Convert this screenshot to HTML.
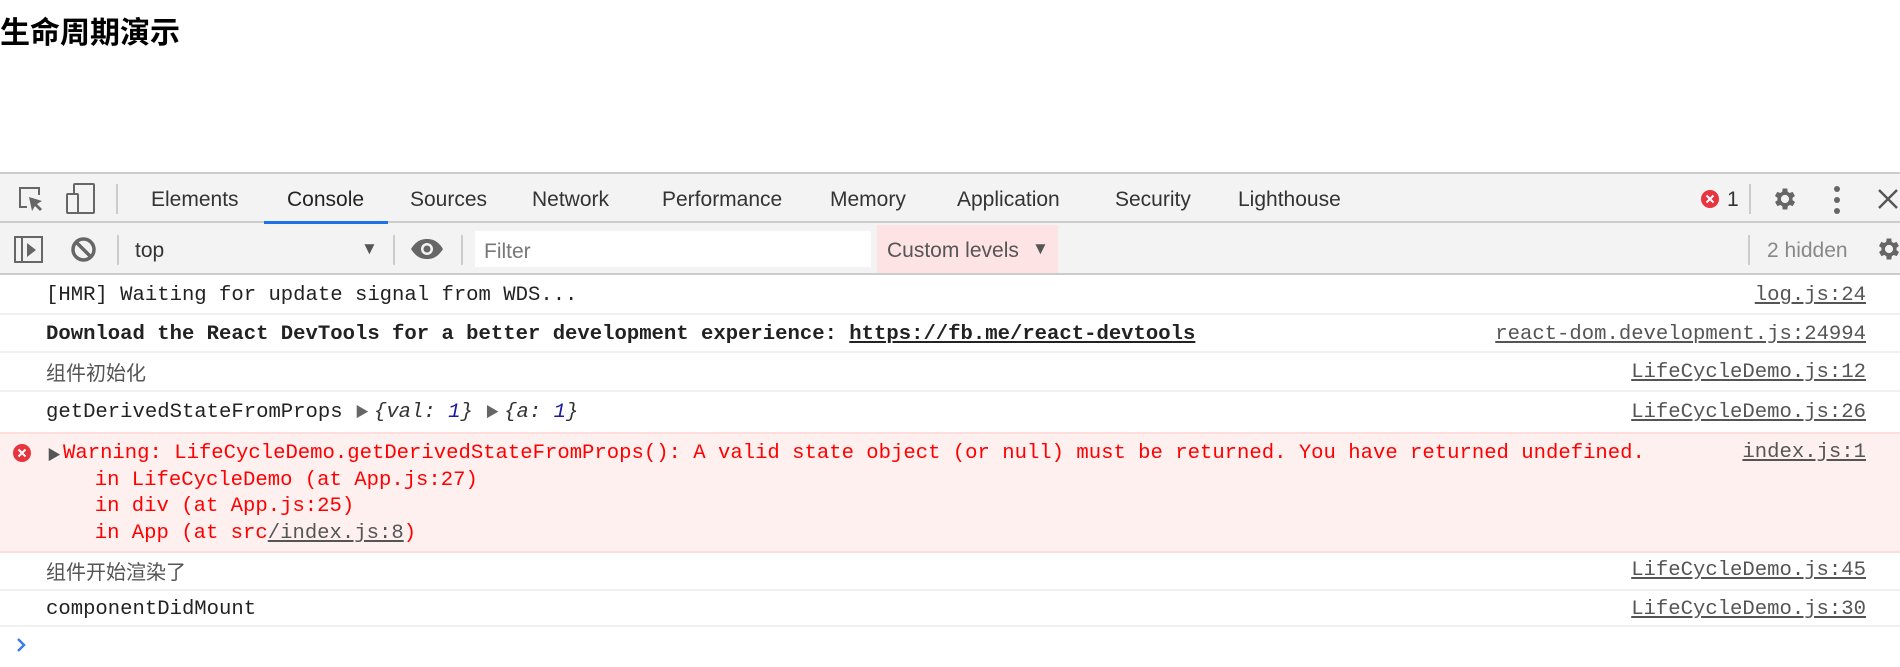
<!DOCTYPE html>
<html><head><meta charset="utf-8"><style>
*{margin:0;padding:0;box-sizing:border-box}
body{width:1900px;height:667px;overflow:hidden;background:#fff;position:relative;font-family:"Liberation Sans","Noto Sans CJK SC",sans-serif}
.abs{position:absolute}
h1{position:absolute;left:0;top:10px;font-size:30px;font-weight:bold;line-height:40px;color:#000;font-family:"Noto Sans CJK SC",sans-serif}
.bar{position:absolute;left:0;width:1900px;background:#f3f3f3}
.tab{position:absolute;top:175px;height:50px;line-height:50px;font-size:21px;color:#333}
.sep{position:absolute;width:2px;background:#ccc}
.mono{font-family:"Liberation Mono","Noto Sans CJK SC",monospace;font-size:20.6px}
.row{position:absolute;left:0;width:1900px;border-bottom:2px solid #f0f0f0}
.txt{position:absolute;left:46px;white-space:pre;color:#222}
.link{position:absolute;right:34px;color:#555;text-decoration:underline;white-space:pre}
.cjk{font-family:"Noto Sans CJK SC",sans-serif;color:#555;font-size:20px}
.red{color:#f00}
.tri{color:#666;font-size:14px;margin-right:5px;font-style:normal}
.ind{display:inline-block;width:7px}
</style></head><body>
<h1>生命周期演示</h1>

<div class="bar" style="top:172px;height:51px;border-top:2px solid #ccc;border-bottom:2px solid #ccc"></div>
<div class="bar" style="top:223px;height:52px;border-bottom:2px solid #ccc"></div>

<svg class="abs" style="left:17px;top:185px" width="30" height="30" viewBox="0 0 30 30" fill="none" stroke="#666" stroke-width="2"><path d="M10 22H3V3h19v7"/><path d="M12 12l3 14 3-5 5 5 2-2-5-5 5-3z" fill="#666" stroke="none"/></svg>
<svg class="abs" style="left:64px;top:181px" width="34" height="36" viewBox="0 0 34 36" fill="none" stroke="#666" stroke-width="2"><rect x="10" y="3" width="20" height="29" rx="1"/><rect x="3" y="13" width="11" height="19" rx="1" fill="#f3f3f3"/></svg>
<div class="sep" style="left:116px;top:184px;height:30px"></div>

<div class="tab" style="left:151px">Elements</div>
<div class="tab" style="left:287px;color:#222">Console</div>
<div class="abs" style="left:264px;top:221px;width:124px;height:3px;background:#1a73e8"></div>
<div class="tab" style="left:410px">Sources</div>
<div class="tab" style="left:532px">Network</div>
<div class="tab" style="left:662px">Performance</div>
<div class="tab" style="left:830px">Memory</div>
<div class="tab" style="left:957px">Application</div>
<div class="tab" style="left:1115px">Security</div>
<div class="tab" style="left:1238px">Lighthouse</div>

<svg class="abs" style="left:1700px;top:189px" width="20" height="20" viewBox="0 0 20 20"><circle cx="10" cy="10" r="9" fill="#e8343f"/><path d="M6.5 6.5l7 7M13.5 6.5l-7 7" stroke="#fff" stroke-width="2"/></svg>
<div class="tab" style="left:1727px;color:#333">1</div>
<div class="sep" style="left:1749px;top:184px;height:30px"></div>
<svg class="abs" style="left:1771px;top:185px" width="28" height="28" viewBox="0 0 24 24"><path fill="#666" d="M19.4 13a7.5 7.5 0 000-2l2.1-1.6-2-3.5-2.5 1a7 7 0 00-1.7-1L15 3h-4l-.4 2.9a7 7 0 00-1.7 1l-2.5-1-2 3.5L6.6 11a7.5 7.5 0 000 2l-2.1 1.6 2 3.5 2.5-1a7 7 0 001.7 1L11 21h4l.4-2.9a7 7 0 001.7-1l2.5 1 2-3.5zM13 15.5a3.5 3.5 0 110-7 3.5 3.5 0 010 7z" transform="translate(-1 0)"/></svg>
<svg class="abs" style="left:1831px;top:185px" width="12" height="30" viewBox="0 0 12 30"><circle cx="6" cy="4" r="3" fill="#666"/><circle cx="6" cy="15" r="3" fill="#666"/><circle cx="6" cy="26" r="3" fill="#666"/></svg>
<svg class="abs" style="left:1877px;top:188px" width="22" height="22" viewBox="0 0 22 22"><path d="M2 2l18 18M20 2L2 20" stroke="#555" stroke-width="2.4"/></svg>

<svg class="abs" style="left:14px;top:236px" width="30" height="28" viewBox="0 0 30 28" fill="none" stroke="#666" stroke-width="2"><rect x="1" y="1" width="27" height="25"/><path d="M8 1v25"/><path d="M13 7l9 7-9 7z" fill="#666" stroke="none"/></svg>
<svg class="abs" style="left:70px;top:236px" width="27" height="27" viewBox="0 0 27 27" fill="none" stroke="#666" stroke-width="3.5"><circle cx="13.5" cy="13.5" r="10.5"/><path d="M6 6l15 15"/></svg>
<div class="sep" style="left:117px;top:235px;height:30px"></div>
<div class="tab" style="left:135px;top:226px;color:#333">top</div>
<div class="abs" style="left:361px;top:239px;font-size:17px;color:#555">▼</div>
<div class="sep" style="left:393px;top:235px;height:30px"></div>
<svg class="abs" style="left:410px;top:238px" width="34" height="22" viewBox="0 0 34 22"><path d="M1 11C6 3 11 1 17 1s11 2 16 10c-5 8-10 10-16 10S6 19 1 11z" fill="#666"/><circle cx="17" cy="11" r="6" fill="#f3f3f3"/><circle cx="17" cy="11" r="3.5" fill="#666"/></svg>
<div class="sep" style="left:461px;top:235px;height:30px"></div>
<div class="abs" style="left:475px;top:231px;width:396px;height:36px;background:#fff"></div>
<div class="tab" style="left:484px;top:227px;color:#777">Filter</div>
<div class="abs" style="left:877px;top:225px;width:181px;height:48px;background:#fde3e4"></div>
<div class="tab" style="left:887px;top:226px;color:#555">Custom levels</div>
<div class="abs" style="left:1032px;top:239px;font-size:17px;color:#555">▼</div>
<div class="sep" style="left:1748px;top:235px;height:30px"></div>
<div class="tab" style="left:1767px;top:226px;color:#888">2 hidden</div>
<svg class="abs" style="left:1875px;top:235px" width="28" height="28" viewBox="0 0 24 24"><path fill="#666" d="M19.4 13a7.5 7.5 0 000-2l2.1-1.6-2-3.5-2.5 1a7 7 0 00-1.7-1L15 3h-4l-.4 2.9a7 7 0 00-1.7 1l-2.5-1-2 3.5L6.6 11a7.5 7.5 0 000 2l-2.1 1.6 2 3.5 2.5-1a7 7 0 001.7 1L11 21h4l.4-2.9a7 7 0 001.7-1l2.5 1 2-3.5zM13 15.5a3.5 3.5 0 110-7 3.5 3.5 0 010 7z" transform="translate(-1 0)"/></svg>

<div class="row mono" style="top:275px;height:40px"><div class="txt" style="top:9px">[HMR] Waiting for update signal from WDS...</div><div class="link" style="top:9px">log.js:24</div></div>
<div class="row mono" style="top:315px;height:38px"><div class="txt" style="top:8px;font-weight:bold">Download the React DevTools for a better development experience: <u>https://fb.me/react-devtools</u></div><div class="link" style="top:8px">react-dom.development.js:24994</div></div>
<div class="row mono" style="top:353px;height:39px"><div class="txt cjk" style="top:4px">组件初始化</div><div class="link" style="top:8px">LifeCycleDemo.js:12</div></div>
<div class="row mono" style="top:392px;height:41px;border-bottom:none"><div class="txt" style="top:9px">getDerivedStateFromProps <span class="tri">▶</span><i style="color:#333">{val: <span style="color:#1a1aa6">1</span>}</i> <span class="tri">▶</span><i style="color:#333">{a: <span style="color:#1a1aa6">1</span>}</i></div><div class="link" style="top:9px">LifeCycleDemo.js:26</div></div>
<div class="row mono" style="top:432px;height:121px;background:#fff0f0;border-top:2px solid #fdd;border-bottom:2px solid #fdd">
<svg class="abs" style="left:12px;top:9px" width="20" height="20" viewBox="0 0 20 20"><circle cx="10" cy="10" r="9" fill="#e8343f"/><path d="M6.5 6.5l7 7M13.5 6.5l-7 7" stroke="#fff" stroke-width="2"/></svg>
<div class="abs" style="left:47px;top:11px;color:#555;font-size:14px">▶</div>
<div class="txt red" style="left:63px;top:7px;line-height:26.7px">Warning: LifeCycleDemo.getDerivedStateFromProps(): A valid state object (or null) must be returned. You have returned undefined.
  <span class="ind"></span>in LifeCycleDemo (at App.js:27)
  <span class="ind"></span>in div (at App.js:25)
  <span class="ind"></span>in App (at src<u style="color:#555">/index.js:8</u>)</div>
<div class="link" style="top:7px">index.js:1</div></div>
<div class="row mono" style="top:553px;height:38px"><div class="txt cjk" style="top:3px">组件开始渲染了</div><div class="link" style="top:6px">LifeCycleDemo.js:45</div></div>
<div class="row mono" style="top:591px;height:36px"><div class="txt" style="top:7px">componentDidMount</div><div class="link" style="top:7px">LifeCycleDemo.js:30</div></div>
<svg class="abs" style="left:15px;top:637px" width="12" height="16" viewBox="0 0 12 16"><path d="M3 2l6 6-6 6" fill="none" stroke="#3b7de8" stroke-width="2.5"/></svg>
</body></html>
